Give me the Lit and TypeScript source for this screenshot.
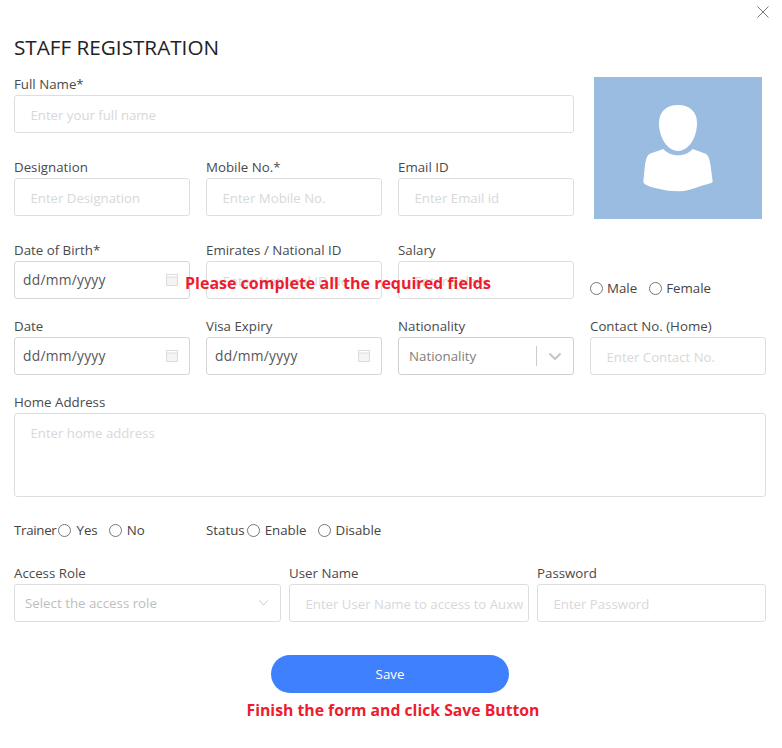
import { LitElement, html, css, svg } from "lit";
import { customElement } from "lit/decorators.js";

const calendar = html`<svg class="cal" width="12" height="13" viewBox="0 0 12 13"><path d="M.5 1.500h11v11H.5z M.5 1.500v2.500h11V1.500" fill="#f4f4f2" stroke="#dcdcdc" stroke-width="1"/></svg>`;
const chevron = (color: string, weight: number, w: number, h: number) => html`<svg width=${w} height=${h} viewBox="0 0 12 7" preserveAspectRatio="none"><path d="M.5.500L6 6L11.500.500" fill="none" stroke=${color} stroke-width=${weight}/></svg>`;
const person = svg`<path fill="#fff" d="M84 28C96 28 103 35 103 46C103 60 95 74 84 74C73 74 65 60 65 46C65 35 72 28 84 28Z"/><path fill="#fff" d="M69.300 72C74 77 79 78.300 84 78.300C89 78.300 94 77 98.700 72L111 76.500C114.500 78 115.500 82 116.500 88L118.700 104.700C118 106.500 113 107 107 109C99 112 92 114.300 84 114.300C76 114.300 69 113 61 111C56 109.500 50 108 49.300 104.700L51 88C52 82 53 78 56.500 76.500Z"/>`;

@customElement("app-root")
export class AppRoot extends LitElement {
  static styles = css`
    :host { display: block; width: 782px; height: 748px; background: #fff; color: #444; position: relative; overflow: hidden;
      font-family: "Open Sans", "Noto Sans", sans-serif; font-size: 13.3px; }
    * { box-sizing: border-box; }
    .page { padding: 35px 16px 0 14px; display: flex; flex-direction: column; }
    .close { position: absolute; left: 757px; top: 6px; }
    h1 { margin: 0 0 15px; font-size: 20.7px; line-height: 24px; font-weight: 400; color: #222; }
    .grid { display: grid; grid-template-columns: repeat(4, 176px); column-gap: 16px; }
    .field { display: flex; flex-direction: column; min-width: 0; }
    .gap-l { margin-bottom: 24px; }
    .gap-s { margin-bottom: 17px; }
    .wide { grid-column: span 3; }
    .full { grid-column: span 4; }
    label { height: 21px; line-height: 20px; display: block; white-space: nowrap; color: #4a4a4a; }
    input.text, textarea, .box { width: 100%; height: 38px; border: 1px solid #dedede; border-radius: 3px; background: transparent;
      font: inherit; color: #444; outline: none; margin: 0; }
    input.text, textarea { padding: 2px 4px 0 15.5px; font-size: 13.2px; }
    input.text::placeholder, textarea::placeholder { color: #d8d8d8; opacity: 1; }
    textarea { height: 84px; padding-top: 10px; resize: none; display: block; }
    .box { display: flex; align-items: center; justify-content: space-between; }
    .date { padding: 0 11px 1px 8px; font-size: 13.8px; letter-spacing: 0.25px; border-color: #d6d6d6; color: #555; }
    .select { padding: 0 12px 0 10px; border-color: #cfcfcf; color: #808080; }
    .sep { width: 1px; height: 20px; background: #ccc; margin-left: auto; margin-right: 12px; }
    .access { color: #bdbdbd; padding: 0 12px 0 10px; }
    .photo-cell { grid-column: 4; grid-row: 1 / span 2; padding: 0 4px; margin-top: 3px; }
    .photo { display: block; width: 168px; height: 142px; }
    .radios { display: flex; align-items: center; white-space: nowrap; }
    .gender { align-self: end; height: 22px; margin-bottom: 17px; }
    .radio { width: 13px; height: 13px; border: 1px solid #767676; border-radius: 50%; flex: none; background: #fff; }
    .radio + span { margin-left: 4px; }
    .gender .second { margin-left: 12px; }
    .flags { display: grid; grid-template-columns: 192px 1fr; height: 22px; margin-top: 22px; margin-bottom: 22px; }
    .flags .radio + span { margin-left: 5px; }
    .flags .lead { margin-left: 2px; }
    .flags .second { margin-left: 11px; }
    .trainer { letter-spacing: -0.3px; }
    .third { display: grid; grid-template-columns: 267px 240px 229px; column-gap: 8px; }
    .actions { display: flex; flex-direction: column; align-items: center; margin-top: 16px; }
    button { width: 238px; height: 38px; border: 0; border-radius: 19px; background: #3f80ff; color: #fff; font: inherit; display: block; padding: 0; }
    .note { color: #ed1c2e; font-weight: 700; font-size: 15.75px; line-height: 20px; white-space: nowrap; }
    .actions .note { margin-top: 7px; margin-left: 6px; }
    .overlay { position: absolute; left: 185px; top: 273px; font-size: 16px; }
  `;

  private field(name: string, ph: string, cls = "gap-s") {
    return html`<div class="field ${cls}"><label>${name}</label><input class="text" placeholder=${ph} /></div>`;
  }
  private date(name: string) {
    return html`<div class="field gap-s"><label>${name}</label><div class="box date"><span>dd/mm/yyyy</span>${calendar}</div></div>`;
  }

  render() {
    return html`
      <svg class="close" width="12" height="12" viewBox="0 0 12 12"><path d="M.5.500l11 11M11.500.500l-11 11" stroke="#777" fill="none"/></svg>
      <div class="page">
        <h1>STAFF REGISTRATION</h1>
        <div class="grid">
          ${this.field("Full Name*", "Enter your full name", "wide gap-l")}
          <div class="photo-cell">
            <svg class="photo" viewBox="0 0 168 142"><rect width="168" height="142" fill="#9bbce1"/>${person}</svg>
          </div>
          ${this.field("Designation", "Enter Designation", "gap-l")}
          ${this.field("Mobile No.*", "Enter Mobile No.", "gap-l")}
          ${this.field("Email ID", "Enter Email id", "gap-l")}
          ${this.date("Date of Birth*")}
          ${this.field("Emirates / National ID", "Enter National ID No")}
          ${this.field("Salary", "Enter Salary")}
          <div class="radios gender">
            <span class="radio"></span><span>Male</span>
            <span class="radio second"></span><span>Female</span>
          </div>
          ${this.date("Date")}
          ${this.date("Visa Expiry")}
          <div class="field gap-s">
            <label>Nationality</label>
            <div class="box select"><span>Nationality</span><span class="sep"></span>${chevron("#c4c4c4", 2, 12, 7)}</div>
          </div>
          ${this.field("Contact No. (Home)", "Enter Contact No.")}
          <div class="field full">
            <label>Home Address</label>
            <textarea placeholder="Enter home address"></textarea>
          </div>
        </div>
        <div class="flags">
          <div class="radios"><span class="trainer">Trainer</span><span class="radio lead"></span><span>Yes</span><span class="radio second"></span><span>No</span></div>
          <div class="radios"><span>Status</span><span class="radio lead"></span><span>Enable</span><span class="radio second"></span><span>Disable</span></div>
        </div>
        <div class="third">
          <div class="field">
            <label>Access Role</label>
            <div class="box access"><span>Select the access role</span>${chevron("#bdbdbd", 1, 9, 6)}</div>
          </div>
          ${this.field("User Name", "Enter User Name to access to Auxwall")}
          ${this.field("Password", "Enter Password")}
        </div>
        <div class="actions">
          <button>Save</button>
          <div class="note">Finish the form and click Save Button</div>
        </div>
      </div>
      <div class="note overlay">Please complete all the required fields</div>
    `;
  }
}
